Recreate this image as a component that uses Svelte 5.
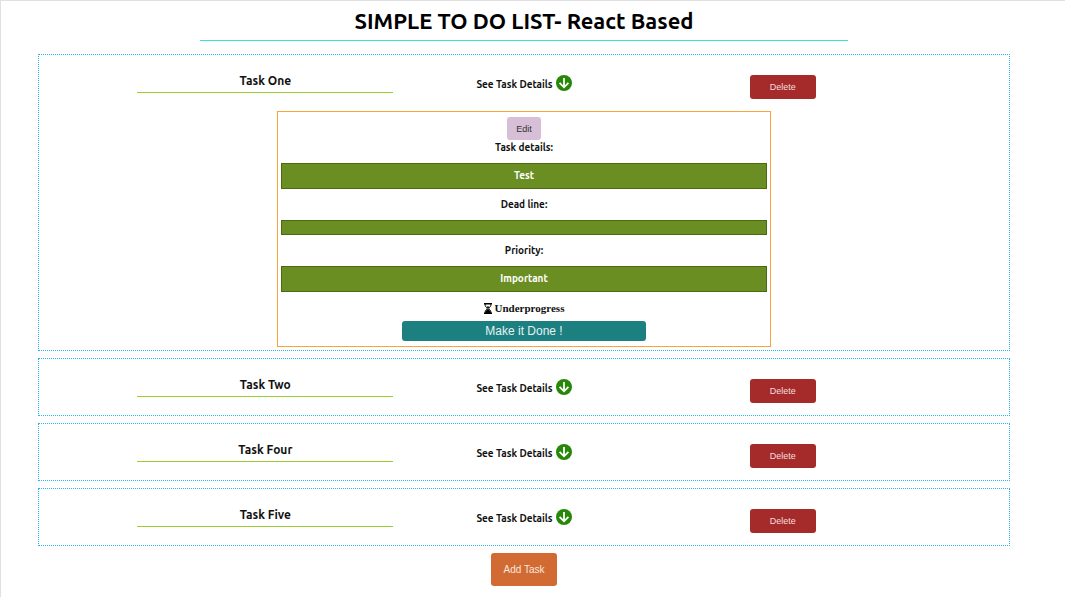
<script>
  let tasks = $state([
    { id: 1, name: 'Task One', details: 'Test', deadline: '', priority: 'Important', open: true },
    { id: 2, name: 'Task Two', details: '', deadline: '', priority: '', open: false },
    { id: 4, name: 'Task Four', details: '', deadline: '', priority: '', open: false },
    { id: 5, name: 'Task Five', details: '', deadline: '', priority: '', open: false }
  ]);

  function remove(id) {
    tasks = tasks.filter((task) => task.id !== id);
  }
</script>

<main>
  <h1>SIMPLE TO DO LIST- React Based</h1>

  <ul class="list">
    {#each tasks as task (task.id)}
      <li class="card">
        <div class="summary">
          <h2>{task.name}</h2>
          <button class="toggle" aria-expanded={task.open} onclick={() => (task.open = !task.open)}>
            <span>See Task Details</span>
            <svg viewBox="0 0 16 16" aria-hidden="true">
              <circle cx="8" cy="8" r="8" fill="#268708" />
              <path d="M8 3v9.4M3.6 7.9 8 12.3l4.4-4.4" fill="none" stroke="#fff" stroke-width="1.8" />
            </svg>
          </button>
          <button class="delete" onclick={() => remove(task.id)}>Delete</button>
        </div>

        {#if task.open}
          <section class="details">
            <button class="edit">Edit</button>
            <h3>Task details:</h3>
            <p class="value">{task.details}</p>
            <h3>Dead line:</h3>
            <p class="value">{task.deadline}</p>
            <h3>Priority:</h3>
            <p class="value">{task.priority}</p>
            <p class="status">
              <svg viewBox="0 0 8 11" aria-hidden="true">
                <path d="M0 0h8v1.4H0zM0 9.6h8V11H0z" />
                <path d="M1.2 1v1.4C1.2 4 3.2 4.6 3.2 5.5S1.2 7 1.2 8.6V10M6.8 1v1.4C6.8 4 4.8 4.6 4.8 5.5S6.8 7 6.8 8.6V10" fill="none" stroke="#000" />
                <path d="M1.4 10V8.6L3.6 6h.8l2.2 2.6V10zM2.4 3.6h3.2L4.4 5.3h-.8z" />
              </svg>
              <span>Underprogress</span>
            </p>
            <button class="done">Make it Done !</button>
          </section>
        {/if}
      </li>
    {/each}
  </ul>

  <button class="add">Add Task</button>
</main>

<style>
  :global(body) {
    margin: 0;
    background: #fff;
  }

  main {
    display: flex;
    flex-direction: column;
    align-items: center;
    box-sizing: border-box;
    min-height: 100vh;
    padding: 0 55px 10px 37px;
    border-top: 1px solid #e0e0e0;
    border-left: 1px solid #e0e0e0;
    color: #111;
    font-family: Ubuntu, "Noto Sans", sans-serif;
  }

  h1, h2, h3, p {
    margin: 0;
    text-align: center;
  }

  h1 {
    box-sizing: border-box;
    width: 66.6%;
    padding: 4px 0;
    border-bottom: 1px solid #40e0d0;
    color: #000;
    font-size: 22px;
    line-height: 31px;
    white-space: nowrap;
  }

  button {
    border: 0;
    border-radius: 3px;
    font-family: "Liberation Sans", Arial, sans-serif;
    cursor: pointer;
  }

  .list {
    display: flex;
    flex-direction: column;
    gap: 7px;
    box-sizing: border-box;
    width: 100%;
    margin: 13px 0 7px;
    padding: 0;
    list-style: none;
  }

  .card {
    display: flex;
    flex-direction: column;
    align-items: center;
    border: 1px dotted #27b4f0;
  }

  .summary {
    display: grid;
    grid-template-columns: repeat(3, 1fr);
    align-items: center;
    justify-items: center;
    width: 80%;
    height: 56px;
  }

  h2 {
    width: 256px;
    max-width: 100%;
    border-bottom: 1px solid #9acd32;
    font-size: 12px;
    line-height: 22px;
    margin-bottom: 4px;
  }

  .toggle {
    display: flex;
    align-items: center;
    gap: 3px;
    padding: 0;
    background: none;
    color: #111;
    font: bold 10px/18px Ubuntu, "Noto Sans", sans-serif;
    white-space: nowrap;
  }

  .toggle span {
    padding-top: 4px;
  }

  .toggle svg {
    width: 16px;
    height: 16px;
  }

  .delete {
    width: 66px;
    height: 24px;
    margin-top: 8px;
    background: #a52a2a;
    color: #f6dede;
    font-size: 9px;
  }

  .details {
    display: flex;
    flex-direction: column;
    align-items: center;
    box-sizing: border-box;
    width: 51%;
    margin-bottom: 3px;
    padding: 5px 3px;
    border: 1px solid #fca33c;
  }

  .edit {
    width: 34px;
    height: 23px;
    background: #d8bfd8;
    color: #333;
    font-size: 9px;
  }

  h3 {
    font-size: 10px;
    line-height: 15px;
  }

  .value {
    box-sizing: border-box;
    width: 100%;
    min-height: 15px;
    margin: 8px 0;
    border: 1px solid #4c6a12;
    background: #6b8e23;
    color: #fff;
    font-size: 10px;
    font-weight: bold;
    line-height: 14px;
  }

  .value:not(:empty) {
    padding: 5px 0;
  }

  .status {
    display: flex;
    align-items: center;
    gap: 3px;
    font: bold 11px/16px "Liberation Serif", "Times New Roman", serif;
  }

  .status svg {
    width: 8px;
    height: 11px;
  }

  .done {
    width: 50%;
    height: 20px;
    margin-top: 5px;
    padding: 0;
    background: #1d8080;
    color: #e4f2f2;
    font-size: 12px;
  }

  .add {
    width: 66px;
    height: 33px;
    padding: 0;
    background: #d26b33;
    color: #fae8df;
    font-size: 10px;
  }
</style>
